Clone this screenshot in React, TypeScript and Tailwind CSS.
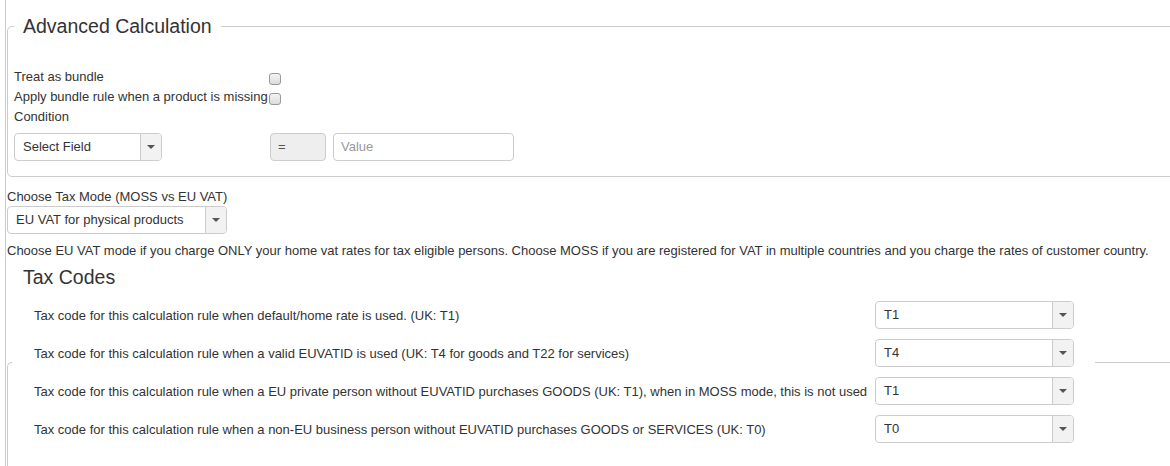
const taxRows = [
  { label: "Tax code for this calculation rule when default/home rate is used. (UK: T1)", value: "T1" },
  { label: "Tax code for this calculation rule when a valid EUVATID is used (UK: T4 for goods and T22 for services)", value: "T4" },
  {
    label:
      "Tax code for this calculation rule when a EU private person without EUVATID purchases GOODS (UK: T1), when in MOSS mode, this is not used",
    value: "T1",
  },
  {
    label: "Tax code for this calculation rule when a non-EU business person without EUVATID purchases GOODS or SERVICES (UK: T0)",
    value: "T0",
  },
];

function Caret() {
  return (
    <svg width="8" height="4" viewBox="0 0 8 4" className="block">
      <polygon points="0,0 8,0 4,4" fill="#555" />
    </svg>
  );
}

function Select({ value, width }: { value: string; width: string }) {
  return (
    <div className={`flex h-[28px] shrink-0 overflow-hidden rounded-[4px] border border-[#ccc] bg-white ${width}`}>
      <div className="flex flex-1 items-center pl-[8px] text-[13px] text-[#333]">{value}</div>
      <div className="flex w-[21px] items-center justify-center border-l border-[#ccc] bg-[#f2f2f2]">
        <Caret />
      </div>
    </div>
  );
}

function Checkbox() {
  return <span className="mt-[4px] block h-[12px] w-[12px] rounded-[3px] border border-[#999] bg-gradient-to-b from-[#f4f4f4] to-[#dcdcdc]" />;
}

export default function App() {
  return (
    <div className="h-[466px] overflow-hidden bg-white pl-[5px] font-['Liberation_Sans',Arial,sans-serif] text-[#333]">
      <div className="h-full border-l border-[#ccc] pl-[1px] pt-[12px]">
        <fieldset className="mb-[10px] w-[1200px] rounded-[5px] border border-[#ccc] pb-[15px] pl-[6px]">
          <legend className="px-[9px] text-[19.5px] leading-[28px] text-[#333]">Advanced Calculation</legend>
          <div className="pt-[27px] text-[13px] leading-[20px]">
            <div className="flex h-[20px] items-center">
              <span className="w-[255px] whitespace-nowrap">Treat as bundle</span>
              <Checkbox />
            </div>
            <div className="flex h-[20px] items-center">
              <span className="w-[255px] whitespace-nowrap">Apply bundle rule when a product is missing</span>
              <Checkbox />
            </div>
            <div className="h-[20px]">Condition</div>
            <div className="mt-[6px] flex items-center">
              <Select value="Select Field" width="w-[148px]" />
              <div className="ml-[108px] flex h-[28px] w-[56px] items-center rounded-[4px] border border-[#ccc] bg-[#eee] pl-[7px] text-[#555]">
                =
              </div>
              <div className="ml-[7px] flex h-[28px] w-[181px] items-center rounded-[4px] border border-[#ccc] bg-white pl-[7px] text-[#999]">
                Value
              </div>
            </div>
          </div>
        </fieldset>

        <div className="text-[13px] leading-[19px]">Choose Tax Mode (MOSS vs EU VAT)</div>
        <Select value="EU VAT for physical products" width="w-[220px]" />
        <p className="mt-[8px] whitespace-nowrap text-[13px] leading-[18px]">
          Choose EU VAT mode if you charge ONLY your home vat rates for tax eligible persons. Choose MOSS if you are registered for VAT
          in multiple countries and you charge the rates of customer country.
        </p>

        <h3 className="ml-[16px] mt-[6px] text-[19.5px] leading-[22px]">Tax Codes</h3>
        <div className="relative z-10 ml-[5px] mt-[8px] w-[1083px] bg-white">
          {taxRows.map((row, i) => (
            <div key={i} className="flex h-[38px] items-center pl-[22px]">
              <div className="w-[841px] pt-[2px] text-[13px] leading-[18px] text-[#333]">{row.label}</div>
              <Select value={row.value} width="w-[199px]" />
            </div>
          ))}
        </div>
        <div className="-mt-[86px] h-[140px] w-[1200px] rounded-tl-[5px] border-l border-t border-[#ccc]" />
      </div>
    </div>
  );
}
